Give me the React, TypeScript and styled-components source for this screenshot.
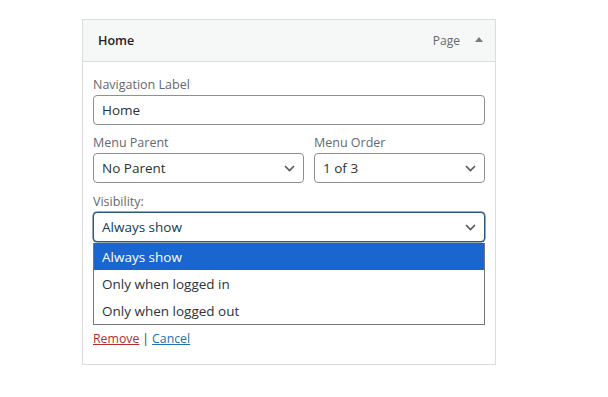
import React from "react";
import styled, { createGlobalStyle } from "styled-components";

const Global = createGlobalStyle`
  html, body { margin: 0; padding: 0; background: #ffffff; }
  body { font-family: "Segoe UI", "Open Sans", "Noto Sans", sans-serif; }
`;

const Page = styled.div`
  padding: 19px 0 0 82px;
`;

const Card = styled.div`
  width: 412px;
  border: 1px solid #dcdcde;
  background: #fff;
`;

const Header = styled.div`
  height: 41px;
  display: flex;
  align-items: center;
  padding: 0 12px 0 15px;
  background: #f6f7f7;
  border-bottom: 1px solid #dcdcde;
`;

const Title = styled.div`
  flex: 1;
  font-size: 12.5px;
  font-weight: 600;
  color: #1d2327;
`;

const ItemType = styled.span`
  font-size: 12px;
  color: #646970;
  margin-right: 15px;
`;

const Toggle = styled.span`
  width: 0;
  height: 0;
  border-left: 4px solid transparent;
  border-right: 4px solid transparent;
  border-bottom: 5px solid #787c82;
  margin-bottom: 2px;
`;

const Body = styled.div`
  padding: 14px 10px 16px 10px;
  display: flex;
  flex-direction: column;
`;

const Field = styled.div<{ $gap?: number; $basis?: number }>`
  display: flex;
  flex-direction: column;
  margin-top: ${(p) => p.$gap ?? 0}px;
  min-width: 0;
  flex: ${(p) => (p.$basis ? `0 0 ${p.$basis}px` : "1")};
`;

const Row = styled.div`
  display: flex;
  gap: 10px;
  margin-top: 9px;
`;

const Label = styled.label`
  font-size: 12.5px;
  line-height: 18px;
  color: #646970;
  margin-bottom: 1px;
`;

const Box = styled.div<{ $focused?: boolean }>`
  height: 30px;
  box-sizing: border-box;
  border: 1px solid ${(p) => (p.$focused ? "#2c5777" : "#8c8f94")};
  box-shadow: ${(p) => (p.$focused ? "0 0 0 0.5px #2c5777" : "none")};
  border-radius: 4px;
  display: flex;
  align-items: center;
  padding: 0 8px 0 8px;
  font-size: 13.5px;
  color: ${(p) => (p.$focused ? "#0f3b57" : "#2c3338")};
  background: #fff;
`;

const BoxText = styled.span`
  flex: 1;
`;

const List = styled.div`
  border: 1px solid #767676;
  border-top: none;
  display: flex;
  flex-direction: column;
  margin-top: 1px;
`;

const Option = styled.div<{ $active?: boolean }>`
  height: 27px;
  display: flex;
  align-items: center;
  padding-left: 8px;
  font-size: 13.5px;
  background: ${(p) => (p.$active ? "#1a66d0" : "#fff")};
  color: ${(p) => (p.$active ? "#fff" : "#2c3338")};
`;

const Actions = styled.div`
  margin-top: 5px;
  font-size: 12.3px;
  line-height: 18px;
  color: #2c3338;
  display: flex;
  gap: 3px;
`;

const Link = styled.a<{ $danger?: boolean }>`
  color: ${(p) => (p.$danger ? "#b32d2e" : "#2271b1")};
  text-decoration: underline;
  cursor: pointer;
`;

const Chevron = () => (
  <svg width="11" height="7" viewBox="0 0 11 7">
    <path d="M1 1 L5.5 5.5 L10 1" fill="none" stroke="#50575e" strokeWidth="1.6" />
  </svg>
);

const Select = ({ value, focused }: { value: string; focused?: boolean }) => (
  <Box $focused={focused}>
    <BoxText>{value}</BoxText>
    <Chevron />
  </Box>
);

export default function App() {
  return (
    <Page>
      <Global />
      <Card>
        <Header>
          <Title>Home</Title>
          <ItemType>Page</ItemType>
          <Toggle />
        </Header>
        <Body>
          <Field>
            <Label>Navigation Label</Label>
            <Box>Home</Box>
          </Field>
          <Row>
            <Field>
              <Label>Menu Parent</Label>
              <Select value="No Parent" />
            </Field>
            <Field $basis={171}>
              <Label>Menu Order</Label>
              <Select value="1 of 3" />
            </Field>
          </Row>
          <Field $gap={10}>
            <Label>Visibility:</Label>
            <Select value="Always show" focused />
            <List>
              <Option $active>Always show</Option>
              <Option>Only when logged in</Option>
              <Option>Only when logged out</Option>
            </List>
          </Field>
          <Actions>
            <Link $danger>Remove</Link>
            <span>|</span>
            <Link>Cancel</Link>
          </Actions>
        </Body>
      </Card>
    </Page>
  );
}
